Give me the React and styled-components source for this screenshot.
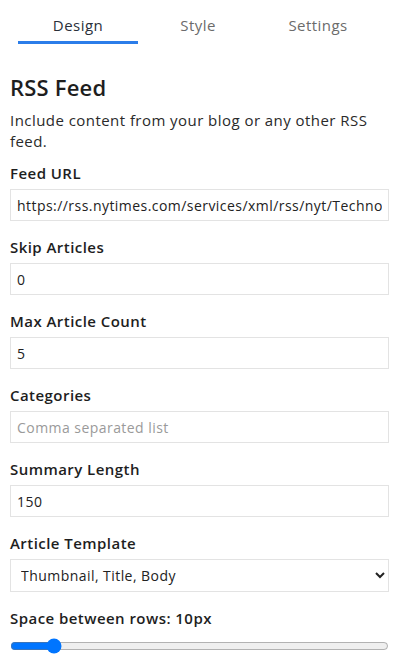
import React, {useState} from "react";
import styled, {createGlobalStyle} from "styled-components";

const GlobalStyle = createGlobalStyle`
  body {
    margin: 0;
    background: #fff;
    font-family: "Open Sans", "Liberation Sans", sans-serif;
    letter-spacing: 0.45px;
    color: #222;
  }
`

const Panel = styled.div`
  width: 399px;
  padding: 0 10px;
  box-sizing: border-box;
`

const Tabs = styled.div`
  display: flex;
  margin: 0 8px;
`

const Tab = styled.div`
  width: 120px;
  text-align: center;
  font-size: 15px;
  line-height: 20px;
  padding: 15px 0 6px;
  color: ${props => props.active ? "#2a2f3a" : "#6b6b6b"};
  border-bottom: 3px solid ${props => props.active ? "#2b7de9" : "transparent"};
  cursor: pointer;
`

const Title = styled.h2`
  font-size: 22px;
  line-height: 28px;
  font-weight: 600;
  letter-spacing: 0.2px;
  margin: 29px 0 9px;
  color: #1e1e1e;
`

const Intro = styled.p`
  font-size: 15px;
  line-height: 21px;
  margin: 0;
  color: #2a2a2a;
`

const Field = styled.div`
  display: flex;
  flex-direction: column;
  margin-top: ${props => props.first ? "11px" : "16px"};
`

const Label = styled.label`
  font-size: 15px;
  line-height: 20px;
  font-weight: 600;
  color: #1e1e1e;
  margin-bottom: 6px;
`

const Input = styled.input`
  box-sizing: border-box;
  height: 32px;
  width: 100%;
  border: 1px solid #e3e3e3;
  padding: 0 6px;
  font-family: inherit;
  letter-spacing: 0.45px;
  font-size: 14px;
  color: #222;
  outline: none;
  &::placeholder {
    color: #9a9a9a;
  }
`

const Select = styled.select`
  box-sizing: border-box;
  height: 33px;
  width: 100%;
  border: 1px solid #e3e3e3;
  background: #fff;
  padding: 0 6px;
  font-family: inherit;
  letter-spacing: 0.45px;
  font-size: 14px;
  color: #222;
  outline: none;
`

const Range = styled.input`
  width: 100%;
  margin: 4px 0 0;
`

export default function App() {
  const [tab, setTab] = useState("design");
  const [rowSpace, setRowSpace] = useState(10);

  return (
    <Panel>
      <GlobalStyle />
      <Tabs>
        <Tab active={tab === "design"} onClick={() => setTab("design")}>Design</Tab>
        <Tab active={tab === "style"} onClick={() => setTab("style")}>Style</Tab>
        <Tab active={tab === "settings"} onClick={() => setTab("settings")}>Settings</Tab>
      </Tabs>

      <Title>RSS Feed</Title>
      <Intro>Include content from your blog or any other RSS feed.</Intro>

      <Field first>
        <Label htmlFor="url">Feed URL</Label>
        <Input id="url" type="text" defaultValue="https://rss.nytimes.com/services/xml/rss/nyt/Technology.xml" />
      </Field>

      <Field>
        <Label htmlFor="skip">Skip Articles</Label>
        <Input id="skip" type="text" defaultValue="0" />
      </Field>

      <Field>
        <Label htmlFor="max">Max Article Count</Label>
        <Input id="max" type="text" defaultValue="5" />
      </Field>

      <Field>
        <Label htmlFor="cats">Categories</Label>
        <Input id="cats" type="text" placeholder="Comma separated list" />
      </Field>

      <Field>
        <Label htmlFor="summary">Summary Length</Label>
        <Input id="summary" type="text" defaultValue="150" />
      </Field>

      <Field>
        <Label htmlFor="template">Article Template</Label>
        <Select id="template" defaultValue="ttb">
          <option value="ttb">Thumbnail, Title, Body</option>
          <option value="tb">Title, Body</option>
          <option value="t">Title</option>
        </Select>
      </Field>

      <Field>
        <Label htmlFor="space">Space between rows: {rowSpace}px</Label>
        <Range
          id="space"
          type="range"
          min="0"
          max="100"
          value={rowSpace}
          onChange={e => setRowSpace(e.target.value)}
        />
      </Field>
    </Panel>
  )
}
